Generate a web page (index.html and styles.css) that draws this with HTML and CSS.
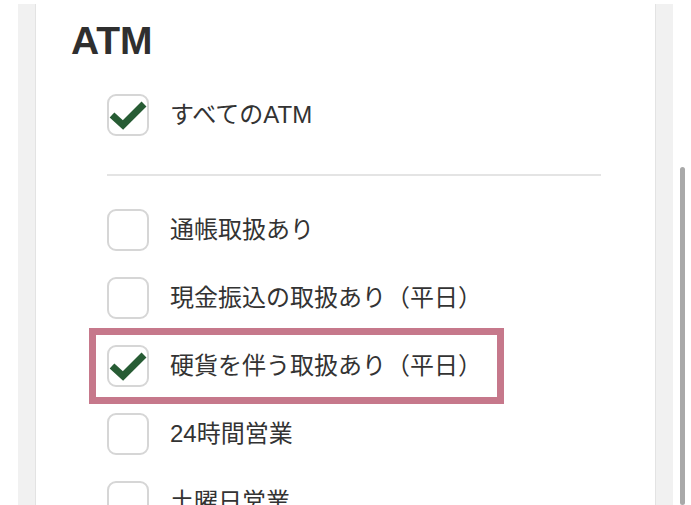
FILE: index.html
```html
<!DOCTYPE html>
<html lang="ja">
<head>
    <meta charset="UTF-8">
    <meta name="viewport" content="width=device-width, initial-scale=1.0">
    <title>ATM</title>
    <link rel="stylesheet" href="styles.css">
</head>
<body>
    <div class="page">
        <div class="side side-left"></div>

        <div class="content">
            <h2 class="title">ATM</h2>

            <div class="list">
                <label class="row">
                    <span class="box"><svg viewBox="0 0 42 42"><polyline points="5,21 16,31 37,10"/></svg></span>
                    <span class="text">すべてのATM</span>
                </label>
            </div>

            <hr class="divider">

            <div class="list">
                <label class="row">
                    <span class="box"></span>
                    <span class="text">通帳取扱あり</span>
                </label>
                <label class="row">
                    <span class="box"></span>
                    <span class="text">現金振込の取扱あり（平日）</span>
                </label>
                <label class="row highlight">
                    <span class="box"><svg viewBox="0 0 42 42"><polyline points="5,21 16,31 37,10"/></svg></span>
                    <span class="text">硬貨を伴う取扱あり（平日）</span>
                </label>
                <label class="row">
                    <span class="box"></span>
                    <span class="text">24時間営業</span>
                </label>
                <label class="row">
                    <span class="box"></span>
                    <span class="text">土曜日営業</span>
                </label>
            </div>
        </div>

        <div class="side side-right"></div>

        <div class="scroll">
            <div class="thumb"></div>
        </div>
    </div>
</body>
</html>
```

FILE: styles.css
```css
* {
    margin: 0;
    padding: 0;
    box-sizing: border-box;
}

html, body {
    height: 100%;
    overflow: hidden;
    background-color: #fff;
}

body {
    font-family: "Liberation Sans", "Noto Sans CJK JP", sans-serif;
    color: #333;
}

.page {
    display: flex;
    height: 100%;
    padding-left: 18px;
}

.side {
    width: 18px;
    margin-top: 4px;
    background-color: #f1f1f1;
}

.side-left {
    border-right: 1px solid #e3e3e3;
}

.side-right {
    border-left: 1px solid #e3e3e3;
}

.content {
    flex: 1;
    padding-top: 17px;
    padding-left: 35px;
}

.title {
    font-size: 39px;
    font-weight: bold;
    line-height: 47px;
    color: #2f2f2f;
}

.list {
    display: flex;
    flex-direction: column;
    gap: 26px;
    padding-left: 36px;
}

.content > .list:first-of-type {
    margin-top: 30px;
}

.divider {
    border: none;
    border-top: 2px solid #e4e4e4;
    margin: 38px 54px 33px 36px;
}

.row {
    display: flex;
    align-items: center;
    gap: 21px;
    width: fit-content;
}

.box {
    width: 42px;
    height: 42px;
    border: 2px solid #d6d6d6;
    border-radius: 9px;
    background-color: #fff;
    flex-shrink: 0;
}

.box svg {
    display: block;
    width: 42px;
    height: 42px;
    margin: -2px;
}

.box polyline {
    fill: none;
    stroke: #275c34;
    stroke-width: 7;
    stroke-linejoin: miter;
}

.text {
    font-size: 24px;
    line-height: 30px;
    color: #333;
}

.highlight {
    padding: 10px 15px 10px 11px;
    margin: -10px 0 -10px -11px;
    outline: 7px solid #c6788b;
}

.scroll {
    width: 18px;
    padding-left: 7px;
    padding-top: 167px;
}

.thumb {
    width: 5px;
    height: 100%;
    border-radius: 3px;
    background-color: #a9a9a9;
}
```
